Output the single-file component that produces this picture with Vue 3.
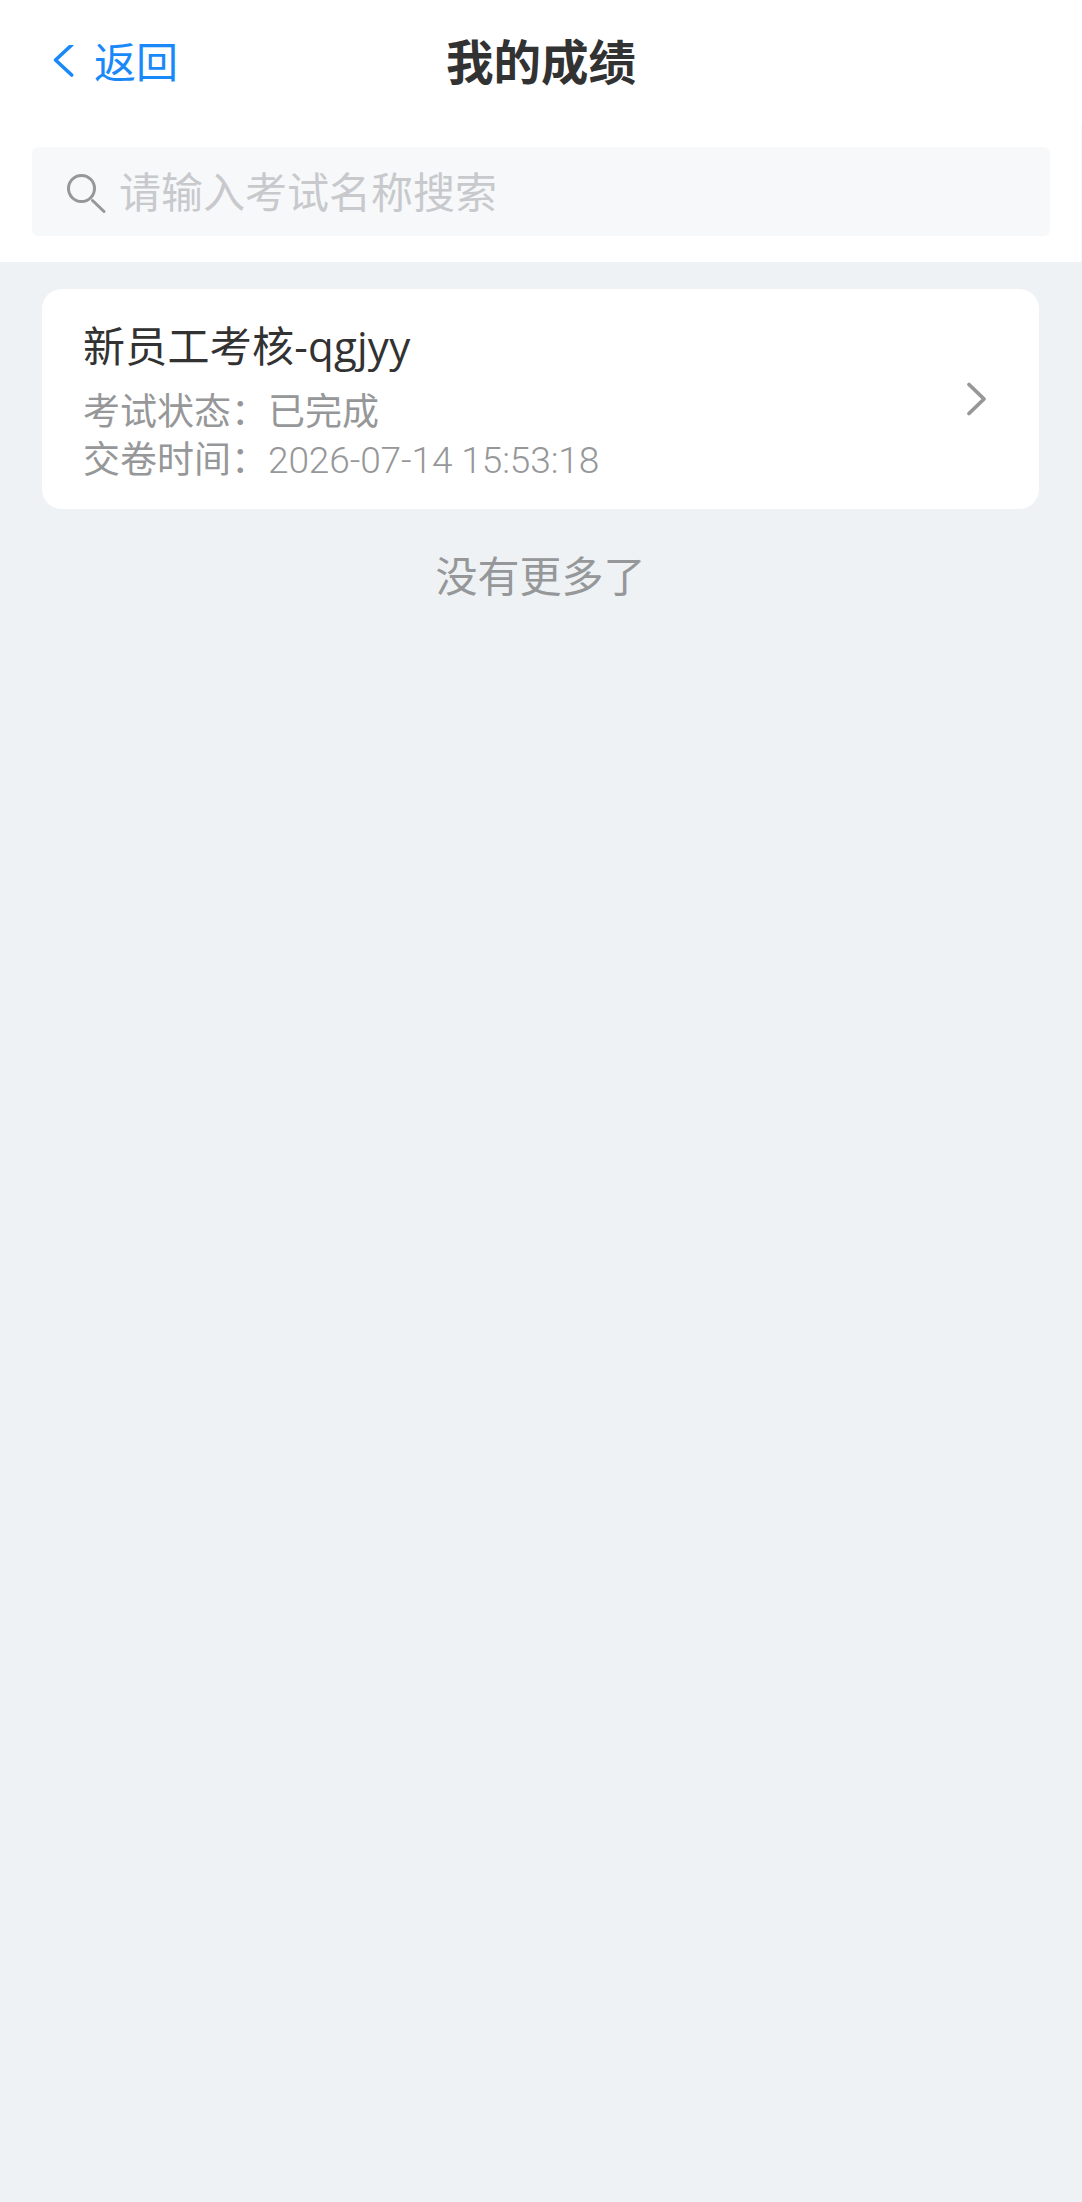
<script setup>
import { ref } from "vue";

const records = ref([
  { id: 1, name: "新员工考核-qgjyy", status: "已完成", time: "2026-07-14 15:53:18" },
]);
</script>

<template>
  <div class="page">
    <header class="top">
      <div class="nav">
        <div class="nav-left">
          <svg class="back-icon" width="24" height="36" viewBox="0 0 24 36">
            <path d="M19.7 0 L3.5 15 L19.7 30" fill="none" stroke="#1989fa" stroke-width="3.6" stroke-linecap="round" stroke-linejoin="round" />
          </svg>
          <span class="back-text">返回</span>
        </div>
        <div class="nav-title">我的成绩</div>
      </div>
      <div class="search-wrap">
        <div class="search">
          <svg class="search-icon" width="42" height="42" viewBox="0 0 42 42">
            <circle cx="17.5" cy="17.5" r="13" fill="none" stroke="#969799" stroke-width="3" />
            <path d="M28.5 29.5 L40 40.5" fill="none" stroke="#969799" stroke-width="3" stroke-linecap="round" />
          </svg>
          <span class="placeholder">请输入考试名称搜索</span>
        </div>
      </div>
    </header>

    <main class="list">
      <div v-for="r in records" :key="r.id" class="card">
        <div class="card-body">
          <div class="card-title">{{ r.name }}</div>
          <div class="card-meta">
            <div class="meta-row"><span class="meta-label">考试状态：</span>{{ r.status }}</div>
            <div class="meta-row"><span class="meta-label">交卷时间：</span><span class="meta-time">{{ r.time }}</span></div>
          </div>
        </div>
        <svg class="arrow" width="24" height="36" viewBox="0 0 24 36">
          <path d="M4 3.5 L19 18 L4 32.5" fill="none" stroke="#969799" stroke-width="3.8" stroke-linecap="round" stroke-linejoin="round" />
        </svg>
      </div>
      <div class="finished">没有更多了</div>
    </main>
  </div>
</template>

<style>
html,
body {
  margin: 0;
  background: #eef2f5;
}
</style>

<style scoped>
.page {
  min-height: 2202px;
  background: #eef2f5;
  font-family: "Open Sans", "Noto Sans CJK SC", sans-serif;
}

.top {
  background: #ffffff;
}

.nav {
  display: grid;
  grid-template-columns: 1fr auto 1fr;
  align-items: center;
  height: 126px;
}

.nav-left {
  display: flex;
  align-items: center;
  padding-left: 52px;
}

.back-icon {
  margin-right: 18px;
}

.back-text {
  margin-bottom: 8px;
  font-size: 42px;
  color: #1989fa;
}

.nav-title {
  margin-bottom: 8px;
  font-size: 47.5px;
  font-weight: 700;
  color: #323233;
}

.search-wrap {
  padding: 21px 31px 26px 32px;
  border-right: 1px solid #f5f6f7;
}

.search {
  display: flex;
  align-items: center;
  height: 89px;
  padding-left: 32px;
  background: #f7f8fa;
  border-radius: 6px;
}

.search-icon {
  margin-right: 13px;
}

.placeholder {
  margin-bottom: 4px;
  font-size: 42px;
  color: #c8c9cc;
}

.list {
  padding: 27px 43px 0 42px;
}

.card {
  display: flex;
  align-items: center;
  justify-content: space-between;
  height: 220px;
  box-sizing: border-box;
  padding: 0 50px 0 41px;
  background: #ffffff;
  border-radius: 20px;
}

.card-body {
  padding-top: 4px;
}

.card-title {
  font-size: 42px;
  line-height: 58px;
  letter-spacing: 0.25px;
  color: #323233;
}

.card-meta {
  margin-top: 12px;
  font-size: 37px;
  line-height: 48px;
  color: #969799;
}

.meta-time {
  font-family: Roboto, "Noto Sans CJK SC", sans-serif;
  font-weight: 300;
  letter-spacing: -0.1px;
}

.finished {
  margin-top: 39px;
  text-align: center;
  font-size: 42px;
  line-height: 56px;
  color: #969799;
}
</style>
